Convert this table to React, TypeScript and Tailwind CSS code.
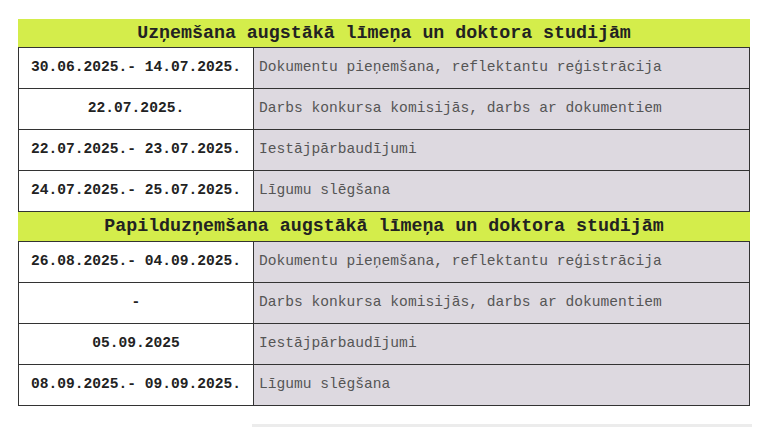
const sections = [
  {
    title: 'Uzņemšana augstākā līmeņa un doktora studijām',
    rows: [
      ['30.06.2025.- 14.07.2025.', 'Dokumentu pieņemšana, reflektantu reģistrācija'],
      ['22.07.2025.', 'Darbs konkursa komisijās, darbs ar dokumentiem'],
      ['22.07.2025.- 23.07.2025.', 'Iestājpārbaudījumi'],
      ['24.07.2025.- 25.07.2025.', 'Līgumu slēgšana'],
    ],
  },
  {
    title: 'Papilduzņemšana augstākā līmeņa un doktora studijām',
    rows: [
      ['26.08.2025.- 04.09.2025.', 'Dokumentu pieņemšana, reflektantu reģistrācija'],
      ['-', 'Darbs konkursa komisijās, darbs ar dokumentiem'],
      ['05.09.2025', 'Iestājpārbaudījumi'],
      ['08.09.2025.- 09.09.2025.', 'Līgumu slēgšana'],
    ],
  },
];

export default function App() {
  return (
    <div className="min-h-[427px] w-[768px] overflow-hidden bg-white pt-[19px] font-['Liberation_Mono',monospace]">
      <div className="ml-[18px] w-[732px]">
        {sections.map((section, i) => (
          <div key={section.title}>
            <div
              className={`flex items-center justify-center bg-[#d4ed4b] text-[18.3px] font-bold leading-none text-[#222] ${
                i === 0 ? 'h-[28px]' : 'h-[29px]'
              }`}
            >
              {section.title}
            </div>
            <div className="border-t border-[#333]">
              {section.rows.map(([date, label]) => (
                <div
                  key={date + label}
                  className="grid h-[41px] grid-cols-[235px_1fr] border-x border-b border-[#333]"
                >
                  <div className="flex items-center justify-center border-r border-[#333] bg-white text-[14.6px] font-bold text-[#222]">
                    {date}
                  </div>
                  <div className="flex items-center bg-[#ddd9e0] pl-[5px] text-[14.6px] text-[#555]">
                    {label}
                  </div>
                </div>
              ))}
            </div>
          </div>
        ))}
      </div>
      <div className="ml-[252px] mt-[18px] h-[3px] w-[500px] bg-[#ececec]" />
    </div>
  );
}
